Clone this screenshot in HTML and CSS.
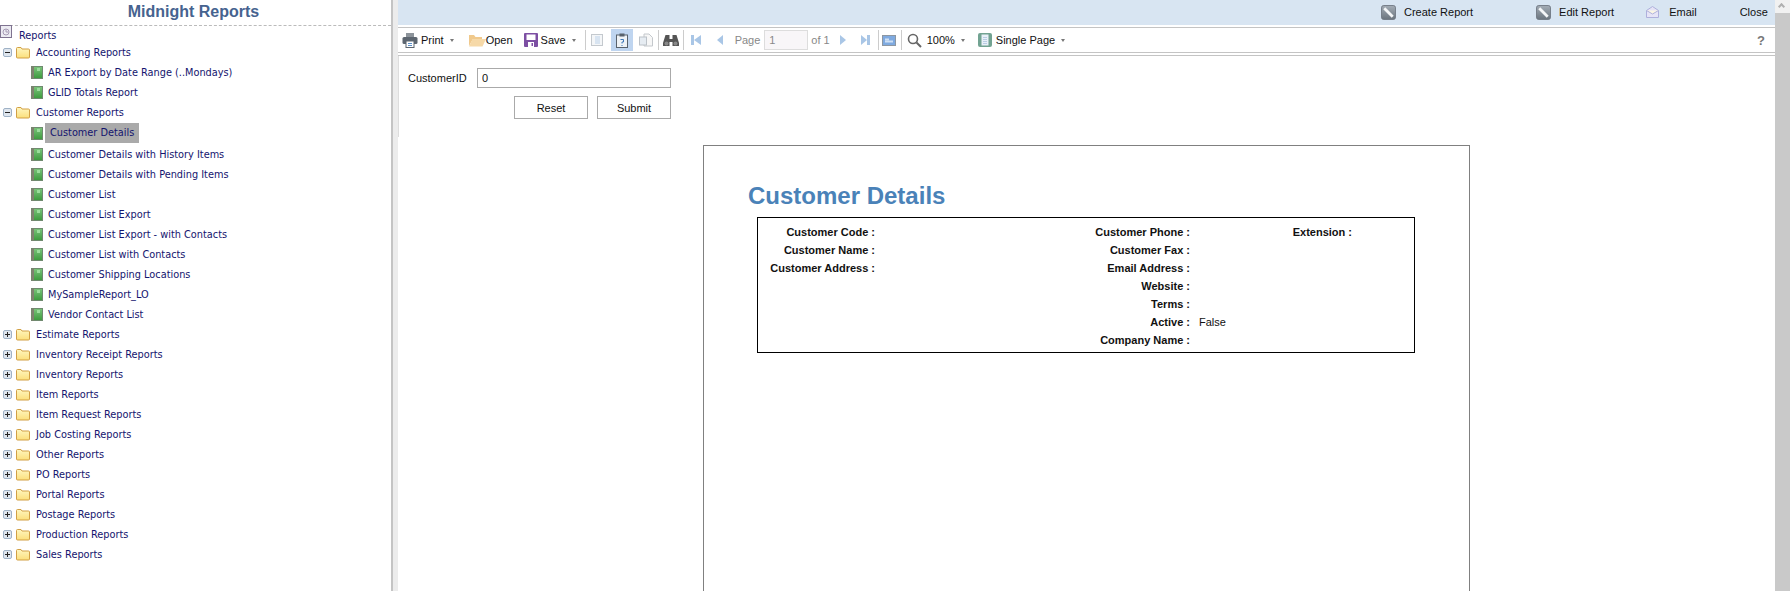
FILE: index.html
```html
<!DOCTYPE html>
<html lang="en">
<head>
    <meta charset="UTF-8">
    <title>Midnight Reports</title>
    <link rel="stylesheet" href="styles.css">
</head>
<body>
    <svg class="sprite" width="0" height="0">
        <defs>
            <linearGradient id="g-folder" x1="0" y1="0" x2="0" y2="1"><stop offset="0" stop-color="#fff6c0"/><stop offset="1" stop-color="#fbdf7c"/></linearGradient>
            <linearGradient id="g-book" x1="0" y1="0" x2="0" y2="1"><stop offset="0" stop-color="#7cc47c"/><stop offset="1" stop-color="#3c9a3c"/></linearGradient>
            <linearGradient id="g-pencil" x1="0" y1="0" x2="0" y2="1"><stop offset="0" stop-color="#a4adb6"/><stop offset="1" stop-color="#6a747e"/></linearGradient>
        </defs>
        <symbol id="i-folder" viewBox="0 0 16 16">
            <path d="M1.5 4.5a1 1 0 0 1 1-1h3.5l1 1.5h6.5a1 1 0 0 1 1 1v7a1 1 0 0 1-1 1h-11a1 1 0 0 1-1-1z" fill="url(#g-folder)" stroke="#d2a045"/>
        </symbol>
        <symbol id="i-report" viewBox="0 0 12 13">
            <rect x="0.5" y="0.5" width="11" height="12" fill="url(#g-book)" stroke="#6f8a6f"/>
            <rect x="0.5" y="0.5" width="2.5" height="12" fill="#80806f"/>
            <rect x="6" y="2" width="3" height="3" fill="#9adc9a"/>
        </symbol>
        <symbol id="i-minus" viewBox="0 0 9 9">
            <rect x="0.5" y="0.5" width="8" height="8" rx="1.5" fill="#dfe6ee" stroke="#9fb2c6"/>
            <path d="M2 4.5h5" stroke="#222"/>
        </symbol>
        <symbol id="i-plus" viewBox="0 0 9 9">
            <rect x="0.5" y="0.5" width="8" height="8" rx="1.5" fill="#dfe6ee" stroke="#9fb2c6"/>
            <path d="M2 4.5h5M4.5 2v5" stroke="#222"/>
        </symbol>
        <symbol id="i-pencil" viewBox="0 0 16 16">
            <rect x="0.5" y="0.5" width="15" height="15" rx="2.5" fill="url(#g-pencil)" stroke="#717a84"/>
            <path d="M3.5 3.5l9 9" stroke="#f4f6f8" stroke-width="3"/>
        </symbol>
    </svg>

    <div class="app">
        <!-- Report tree -->
        <aside class="sidebar">
            <h1 class="side-title">Midnight Reports</h1>
            <div class="tree-root">
                <svg class="root-icon" viewBox="0 0 13 14"><rect x="0.5" y="0.5" width="11" height="12" fill="#ecebf2" stroke="#7f7390"/><circle cx="6" cy="7" r="3" fill="none" stroke="#a69ab4"/><path d="M6 4.500V7h2" fill="none" stroke="#a69ab4"/></svg>
                <span>Reports</span>
            </div>
            <ul class="tree">
                <li class="group"><svg class="toggle"><use href="#i-minus"/></svg><svg class="folder"><use href="#i-folder"/></svg><span>Accounting Reports</span></li>
                <li class="leaf"><svg class="book"><use href="#i-report"/></svg><span>AR Export by Date Range (..Mondays)</span></li>
                <li class="leaf"><svg class="book"><use href="#i-report"/></svg><span>GLID Totals Report</span></li>
                <li class="group"><svg class="toggle"><use href="#i-minus"/></svg><svg class="folder"><use href="#i-folder"/></svg><span>Customer Reports</span></li>
                <li class="leaf selected"><svg class="book"><use href="#i-report"/></svg><span>Customer Details</span></li>
                <li class="leaf"><svg class="book"><use href="#i-report"/></svg><span>Customer Details with History Items</span></li>
                <li class="leaf"><svg class="book"><use href="#i-report"/></svg><span>Customer Details with Pending Items</span></li>
                <li class="leaf"><svg class="book"><use href="#i-report"/></svg><span>Customer List</span></li>
                <li class="leaf"><svg class="book"><use href="#i-report"/></svg><span>Customer List Export</span></li>
                <li class="leaf"><svg class="book"><use href="#i-report"/></svg><span>Customer List Export - with Contacts</span></li>
                <li class="leaf"><svg class="book"><use href="#i-report"/></svg><span>Customer List with Contacts</span></li>
                <li class="leaf"><svg class="book"><use href="#i-report"/></svg><span>Customer Shipping Locations</span></li>
                <li class="leaf"><svg class="book"><use href="#i-report"/></svg><span>MySampleReport_LO</span></li>
                <li class="leaf"><svg class="book"><use href="#i-report"/></svg><span>Vendor Contact List</span></li>
                <li class="group"><svg class="toggle"><use href="#i-plus"/></svg><svg class="folder"><use href="#i-folder"/></svg><span>Estimate Reports</span></li>
                <li class="group"><svg class="toggle"><use href="#i-plus"/></svg><svg class="folder"><use href="#i-folder"/></svg><span>Inventory Receipt Reports</span></li>
                <li class="group"><svg class="toggle"><use href="#i-plus"/></svg><svg class="folder"><use href="#i-folder"/></svg><span>Inventory Reports</span></li>
                <li class="group"><svg class="toggle"><use href="#i-plus"/></svg><svg class="folder"><use href="#i-folder"/></svg><span>Item Reports</span></li>
                <li class="group"><svg class="toggle"><use href="#i-plus"/></svg><svg class="folder"><use href="#i-folder"/></svg><span>Item Request Reports</span></li>
                <li class="group"><svg class="toggle"><use href="#i-plus"/></svg><svg class="folder"><use href="#i-folder"/></svg><span>Job Costing Reports</span></li>
                <li class="group"><svg class="toggle"><use href="#i-plus"/></svg><svg class="folder"><use href="#i-folder"/></svg><span>Other Reports</span></li>
                <li class="group"><svg class="toggle"><use href="#i-plus"/></svg><svg class="folder"><use href="#i-folder"/></svg><span>PO Reports</span></li>
                <li class="group"><svg class="toggle"><use href="#i-plus"/></svg><svg class="folder"><use href="#i-folder"/></svg><span>Portal Reports</span></li>
                <li class="group"><svg class="toggle"><use href="#i-plus"/></svg><svg class="folder"><use href="#i-folder"/></svg><span>Postage Reports</span></li>
                <li class="group"><svg class="toggle"><use href="#i-plus"/></svg><svg class="folder"><use href="#i-folder"/></svg><span>Production Reports</span></li>
                <li class="group"><svg class="toggle"><use href="#i-plus"/></svg><svg class="folder"><use href="#i-folder"/></svg><span>Sales Reports</span></li>
            </ul>
        </aside>

        <div class="splitter"></div>

        <main class="viewer">
            <!-- Top links -->
            <div class="topbar">
                <a class="top-link create"><svg class="top-icon"><use href="#i-pencil"/></svg>Create Report</a>
                <a class="top-link edit"><svg class="top-icon"><use href="#i-pencil"/></svg>Edit Report</a>
                <a class="top-link email">
                    <svg class="mail-icon" viewBox="0 0 13 12"><path d="M0.5 4.5L6.5 0.5l6 4v7h-12z" fill="#e6e4f6" stroke="#aeb0dc"/><path d="M0.5 4.5l6 3.5 6-3.5" fill="#fbf6e4" stroke="#aeb0dc"/></svg>
                    Email
                </a>
                <a class="top-link close">Close</a>
            </div>

            <!-- Viewer toolbar -->
            <div class="toolbar">
                <svg class="tb-icon print" viewBox="0 0 16 16"><rect x="4" y="1" width="8" height="5" fill="#8d949b"/><rect x="0.5" y="5" width="15" height="7" rx="1.5" fill="#5d6670"/><rect x="4" y="9" width="8" height="6.5" fill="#fff" stroke="#5d6670"/><path d="M6 11.5h4M6 13.5h4" stroke="#5b8fc8"/></svg>
                <span class="tb-text">Print</span>
                <span class="caret print-caret"></span>
                <svg class="tb-icon open" viewBox="0 0 18 14"><path d="M1 2h5l1.5 2H14v2H5L1 13z" fill="#f0c98c"/><path d="M4.500 6H18l-3.500 7.500H1z" fill="#f6d9a8"/></svg>
                <span class="tb-text">Open</span>
                <svg class="tb-icon save" viewBox="0 0 14 14"><rect width="14" height="14" rx="1" fill="#7d4fa3"/><rect x="2.500" y="1.500" width="9" height="5.500" fill="#fff"/><rect x="4" y="9" width="6" height="5" fill="#fff"/><rect x="7.500" y="10" width="1.500" height="3" fill="#7d4fa3"/></svg>
                <span class="tb-text">Save</span>
                <span class="caret save-caret"></span>
                <span class="tb-sep sep-a"></span>
                <svg class="tb-icon outline" viewBox="0 0 12 12"><rect x="0.5" y="0.5" width="11" height="11" fill="#f4f6f8" stroke="#c4c9ce"/><path d="M4 3h5M4 5h5M4 7h5M4 9h5" stroke="#bcd2ea"/></svg>
                <span class="tb-active">
                    <svg class="clip-icon" viewBox="0 0 12 15"><rect x="0.500" y="2" width="11" height="12.500" fill="#eef2f6" stroke="#59626c"/><rect x="3.500" y="0.500" width="5" height="3" fill="#59626c"/><path d="M4.500 6.500h3v2.500h-1.500v1.500M6 12v1" fill="none" stroke="#3f78b8"/></svg>
                </span>
                <svg class="tb-icon copy" viewBox="0 0 14 14"><path d="M5 1h5l3.500 3.500V13H5z" fill="#f7f7f7" stroke="#c4c8cc"/><rect x="0.500" y="4" width="7" height="8" fill="#e6ecf2" stroke="#bcc2c8"/></svg>
                <span class="tb-sep sep-b"></span>
                <svg class="tb-icon binoculars" viewBox="0 0 16 13"><path d="M2.500 1h4v4H9.500V1h4l2.500 8v3H9.500V8h-3v4H0V9z" fill="#555"/><circle cx="3.500" cy="9.500" r="2" fill="#888"/><circle cx="12.500" cy="9.500" r="2" fill="#888"/></svg>
                <span class="tb-sep sep-c"></span>
                <svg class="tb-icon first" viewBox="0 0 10 10"><rect width="3" height="10" fill="#a9c6e6"/><path d="M10 0v10L3 5z" fill="#a9c6e6"/></svg>
                <svg class="tb-icon prev" viewBox="0 0 6 10"><path d="M6 0v10L0 5z" fill="#a9c6e6"/></svg>
                <span class="tb-text muted page-label">Page</span>
                <input class="page-input" value="1" disabled>
                <span class="tb-text muted of-label">of 1</span>
                <svg class="tb-icon next" viewBox="0 0 6 10"><path d="M0 0v10l6-5z" fill="#a9c6e6"/></svg>
                <svg class="tb-icon last" viewBox="0 0 9 10"><path d="M0 0v10l6-5z" fill="#a9c6e6"/><rect x="6" width="3" height="10" fill="#a9c6e6"/></svg>
                <span class="tb-sep sep-d"></span>
                <svg class="tb-icon view" viewBox="0 0 14 11"><rect x="0.500" y="0.500" width="13" height="10" fill="#7faae0" stroke="#8d97a2"/><rect x="3" y="3.500" width="4" height="2" fill="#cfe0f4"/><rect x="3" y="5.500" width="8" height="2" fill="#cfe0f4"/></svg>
                <span class="tb-sep sep-e"></span>
                <svg class="tb-icon zoom-icon" viewBox="0 0 15 15"><circle cx="6" cy="6" r="4.500" fill="none" stroke="#666" stroke-width="1.600"/><path d="M9.500 9.500L14 14" stroke="#666" stroke-width="2"/></svg>
                <span class="tb-text zoom-text">100%</span>
                <span class="caret zoom-caret"></span>
                <svg class="tb-icon single" viewBox="0 0 14 14"><rect width="14" height="14" rx="2" fill="#72a392"/><rect x="3.500" y="1.500" width="7" height="11" fill="#e8f0f8"/><path d="M5 4.500h4M5 6.500h4M5 8.500h4M5 10.500h4" stroke="#b9cde4"/></svg>
                <span class="tb-text single-text">Single Page</span>
                <span class="caret single-caret"></span>
                <span class="help">?</span>
            </div>

            <div class="content">
                <!-- Parameters -->
                <form class="params">
                    <div class="param-row">
                        <label class="param-label">CustomerID</label>
                        <input class="param-input" value="0">
                    </div>
                    <div class="param-actions">
                        <button class="param-btn" type="button">Reset</button>
                        <button class="param-btn" type="button">Submit</button>
                    </div>
                </form>

                <!-- Report page -->
                <section class="page">
                    <h2 class="report-title">Customer Details</h2>
                    <div class="details">
                        <div class="col col-left">
                            <div class="field"><b>Customer Code :</b></div>
                            <div class="field"><b>Customer Name :</b></div>
                            <div class="field"><b>Customer Address :</b></div>
                        </div>
                        <div class="col col-mid">
                            <div class="field"><b>Customer Phone :</b></div>
                            <div class="field"><b>Customer Fax :</b></div>
                            <div class="field"><b>Email Address :</b></div>
                            <div class="field"><b>Website :</b></div>
                            <div class="field"><b>Terms :</b></div>
                            <div class="field"><b>Active :</b><span class="value">False</span></div>
                            <div class="field"><b>Company Name :</b></div>
                        </div>
                        <div class="col col-right">
                            <div class="field"><b>Extension :</b></div>
                        </div>
                    </div>
                </section>
            </div>
        </main>

        <div class="scrollbar"><div class="scroll-up"></div><div class="scroll-thumb"></div></div>
    </div>
</body>
</html>
```

FILE: styles.css
```css
/* Global Styles */
html, body {
    margin: 0;
    padding: 0;
    height: 591px;
    overflow: hidden;
    background-color: #fff;
    font-family: 'Liberation Sans', Arial, sans-serif;
    font-size: 11px;
    color: #111;
}

.sprite {
    position: absolute;
}

.app {
    display: flex;
    height: 591px;
}

/* Report tree */
.sidebar {
    width: 391px;
    flex-shrink: 0;
    overflow: hidden;
    font-family: 'DejaVu Sans', Verdana, sans-serif;
    font-size: 9.75px;
    color: #14146e;
}

.side-title {
    margin: 0;
    height: 25px;
    border-bottom: 1px dashed #bbb;
    font-family: 'Liberation Sans', Arial, sans-serif;
    font-size: 16px;
    line-height: 24px;
    text-align: center;
    color: #46638f;
    padding-right: 4px;
}

.tree-root {
    display: flex;
    align-items: center;
    height: 14px;
    padding-top: 2px;
}

.root-icon {
    width: 13px;
    height: 14px;
    margin-top: -6px;
}

.tree-root span {
    margin-left: 6px;
}

.tree {
    list-style: none;
    margin: 0;
    padding: 0;
}

.tree li {
    display: flex;
    align-items: center;
    height: 20px;
    white-space: nowrap;
}

.toggle {
    width: 9px;
    height: 9px;
    margin-left: 3px;
}

.folder {
    width: 16px;
    height: 16px;
    margin-left: 3px;
}

.group span {
    margin-left: 5px;
}

.book {
    width: 12px;
    height: 13px;
    margin-left: 31px;
}

.leaf span {
    margin-left: 5px;
}

.tree li.selected {
    height: 22px;
}

.selected span {
    background-color: #aaa;
    line-height: 20px;
    padding: 0 5px;
    margin-left: 2px;
}

.splitter {
    width: 7px;
    flex-shrink: 0;
    background: linear-gradient(to right, #c4c4c4 0, #c4c4c4 2px, #ececec 2px, #ececec 100%);
}

/* Viewer */
.viewer {
    flex: 1;
    min-width: 0;
    display: flex;
    flex-direction: column;
}

.topbar {
    display: flex;
    align-items: center;
    height: 25px;
    padding-bottom: 1px;
    box-sizing: border-box;
    background-color: #d8e5f2;
    padding-left: 983px;
}

.top-link {
    display: flex;
    align-items: center;
    color: #111;
}

.top-icon {
    width: 15px;
    height: 15px;
    margin-right: 8px;
}

.mail-icon {
    width: 13px;
    height: 12px;
    margin-right: 10px;
}

.edit {
    margin-left: 63px;
}

.email {
    margin-left: 32px;
}

.close {
    margin-left: 43px;
}

.toolbar {
    display: flex;
    align-items: center;
    height: 24px;
    margin-top: 2px;
    border-top: 1px solid #c4c4c4;
    border-bottom: 1px solid #c4c4c4;
    padding-left: 4px;
}

.tb-icon {
    flex-shrink: 0;
}

.tb-text {
    white-space: nowrap;
}

.tb-text.muted {
    color: #888;
}

.print { width: 16px; height: 16px; margin-right: 3px; }
.print-caret { margin-left: 6px; }
.open { width: 18px; height: 14px; margin-left: 14px; }
.save { width: 14px; height: 14px; margin-left: 11px; margin-right: 3px; }
.save-caret { margin-left: 6px; }

.caret {
    width: 0;
    height: 0;
    border-left: 2.5px solid transparent;
    border-right: 2.5px solid transparent;
    border-top: 3px solid #777;
}

.tb-sep {
    width: 1px;
    height: 20px;
    background-color: #ccc;
    flex-shrink: 0;
}

.sep-a { margin-left: 9px; }
.outline { width: 12px; height: 12px; margin-left: 5px; }

.tb-active {
    display: flex;
    align-items: center;
    justify-content: center;
    width: 22px;
    height: 22px;
    margin-left: 8px;
    background-color: #bfd5f0;
}

.clip-icon {
    width: 12px;
    height: 15px;
}

.copy { width: 14px; height: 14px; margin-left: 6px; }
.sep-b { margin-left: 5px; }
.binoculars { width: 16px; height: 13px; margin-left: 4px; }
.sep-c { margin-left: 4px; }
.first { width: 10px; height: 10px; margin-left: 7px; }
.prev { width: 6px; height: 10px; margin-left: 16px; }
.page-label { margin-left: 12px; }

.page-input {
    width: 44px;
    height: 20px;
    margin: 0 0 0 4px;
    padding: 0 4px;
    box-sizing: border-box;
    border: 1px solid #ddd;
    background-color: #f8f6f8;
    font-family: 'Liberation Sans', Arial, sans-serif;
    font-size: 11px;
    color: #888;
}

.of-label { margin-left: 3px; }
.next { width: 6px; height: 10px; margin-left: 10px; }
.last { width: 9px; height: 10px; margin-left: 15px; }
.sep-d { margin-left: 8px; }
.view { width: 14px; height: 11px; margin-left: 3px; }
.sep-e { margin-left: 5px; }
.zoom-icon { width: 15px; height: 15px; margin-left: 5px; }
.zoom-text { margin-left: 5px; }
.zoom-caret { margin-left: 6px; }
.single { width: 14px; height: 14px; margin-left: 13px; }
.single-text { margin-left: 4px; }
.single-caret { margin-left: 6px; }

.help {
    margin-left: auto;
    margin-right: 10px;
    font-size: 13px;
    font-weight: bold;
    color: #777;
}

.content {
    flex: 1;
    margin-top: 2px;
    border-top: 1px solid #c4c4c4;
    overflow: hidden;
}

/* Parameters */
.params {
    height: 81px;
    padding-top: 12px;
    box-sizing: border-box;
    border-left: 1px solid #ddd;
}

.param-row {
    display: flex;
    align-items: center;
    padding-left: 9px;
}

.param-label {
    width: 69px;
}

.param-input {
    width: 194px;
    height: 20px;
    margin: 0;
    padding: 0 4px;
    box-sizing: border-box;
    border: 1px solid #aaa;
    font-family: 'Liberation Sans', Arial, sans-serif;
    font-size: 11px;
    color: #111;
}

.param-actions {
    display: flex;
    gap: 9px;
    margin-top: 8px;
    padding-left: 115px;
}

.param-btn {
    width: 74px;
    height: 23px;
    padding: 0;
    background-color: #fff;
    border: 1px solid #aaa;
    font-family: 'Liberation Sans', Arial, sans-serif;
    font-size: 11px;
    color: #111;
}

/* Report page */
.page {
    width: 767px;
    height: 500px;
    margin: 8px 0 0 305px;
    box-sizing: border-box;
    border: 1px solid #808080;
    padding: 36px 0 0 44px;
}

.report-title {
    margin: 0;
    font-size: 24px;
    line-height: 28px;
    color: #4a82b8;
}

.details {
    display: flex;
    width: 658px;
    height: 136px;
    margin: 7px 0 0 9px;
    box-sizing: border-box;
    border: 1px solid #000;
    padding-top: 5px;
}

.field {
    display: flex;
    justify-content: flex-end;
    position: relative;
    height: 18px;
    line-height: 18px;
}

.col-left { width: 117px; }
.col-mid { width: 315px; }
.col-right { width: 162px; }

.value {
    position: absolute;
    left: 100%;
    margin-left: 9px;
}

/* Scrollbar */
.scrollbar {
    width: 15px;
    flex-shrink: 0;
    display: flex;
    flex-direction: column;
    background-color: #f1f1f1;
}

.scroll-up {
    height: 13px;
    position: relative;
}

.scroll-up::before {
    content: "";
    position: absolute;
    left: 4px;
    top: 4px;
    width: 5px;
    height: 5px;
    border-left: 2px solid #b0b0b0;
    border-top: 2px solid #b0b0b0;
    transform: rotate(45deg);
    box-sizing: border-box;
}

.scroll-thumb {
    flex: 1;
    background-color: #c9c9c9;
}
```
